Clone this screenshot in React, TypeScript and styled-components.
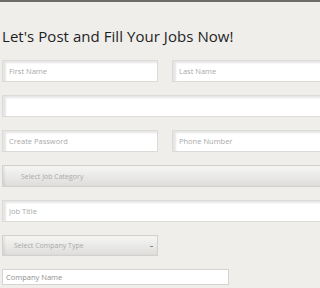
import styled, { createGlobalStyle } from 'styled-components';

const Global = createGlobalStyle`
  html, body {
    margin: 0;
    padding: 0;
    background: #efeeeb;
    overflow: hidden;
  }
  body {
    font-family: "Open Sans", "Liberation Sans", sans-serif;
  }
`;

const Page = styled.div`
  border-top: 2px solid #6e6c69;
  width: 100%;
  height: 288px;
  overflow: hidden;
  padding: 22px 0 0 2px;
  box-sizing: border-box;
`;

const Title = styled.h1`
  margin: 0 0 12px 0;
  font-family: "Open Sans", "Liberation Sans", sans-serif;
  font-weight: 500;
  font-size: 15px;
  letter-spacing: 0.05px;
  color: #1f1f1f;
  line-height: 24px;
  white-space: nowrap;
`;

const Form = styled.form`
  display: flex;
  flex-direction: column;
  gap: 13px;
  width: 330px;
`;

const Row = styled.div`
  display: flex;
  gap: 14px;
`;

const Field = styled.input<{ $w?: number }>`
  box-sizing: border-box;
  width: ${({ $w }) => ($w ? `${$w}px` : '100%')};
  height: 22px;
  padding: 0 6px;
  background: #fff;
  border: 1px solid #dcdbd8;
  box-shadow: inset 3px 2px 2px rgba(0, 0, 0, 0.1);
  font-family: "Open Sans", "Liberation Sans", sans-serif;
  font-size: 7.5px;
  color: #555;
  outline: none;
  &::placeholder {
    color: #a9a9a9;
  }
`;

const Select = styled.div<{ $w?: number; $indent: number; $h: number }>`
  box-sizing: border-box;
  position: relative;
  width: ${({ $w }) => ($w ? `${$w}px` : '100%')};
  height: ${({ $h }) => $h}px;
  display: flex;
  align-items: center;
  padding-left: ${({ $indent }) => $indent}px;
  background: linear-gradient(#f6f6f5, #dedddb);
  border: 1px solid #d2d1ce;
  box-shadow: inset 2px 0 2px rgba(0, 0, 0, 0.06);
  font-size: 7px;
  color: #aaa;
`;

const Arrow = styled.span`
  position: absolute;
  right: 4px;
  top: 50%;
  width: 3px;
  height: 1px;
  background: #888;
`;

const Small = styled.input`
  box-sizing: border-box;
  width: 227px;
  height: 16px;
  padding: 0 3px;
  background: #fff;
  border: 1px solid #d5d4d1;
  font-family: "Open Sans", "Liberation Sans", sans-serif;
  font-size: 7.5px;
  outline: none;
  &::placeholder {
    color: #8f8f8f;
  }
`;

export default function App() {
  return (
    <>
      <Global />
      <Page>
        <Title>Let's Post and Fill Your Jobs Now!</Title>
        <Form>
          <Row>
            <Field $w={156} placeholder="First Name" />
            <Field $w={156} placeholder="Last Name" />
          </Row>
          <Field />
          <Row>
            <Field $w={156} placeholder="Create Password" />
            <Field $w={156} placeholder="Phone Number" />
          </Row>
          <Select $indent={18} $h={22}>Select Job Category</Select>
          <Field placeholder="Job Title" />
          <Select $w={156} $indent={11} $h={21}>
            Select Company Type
            <Arrow />
          </Select>
          <Small placeholder="Company Name" />
        </Form>
      </Page>
    </>
  );
}
